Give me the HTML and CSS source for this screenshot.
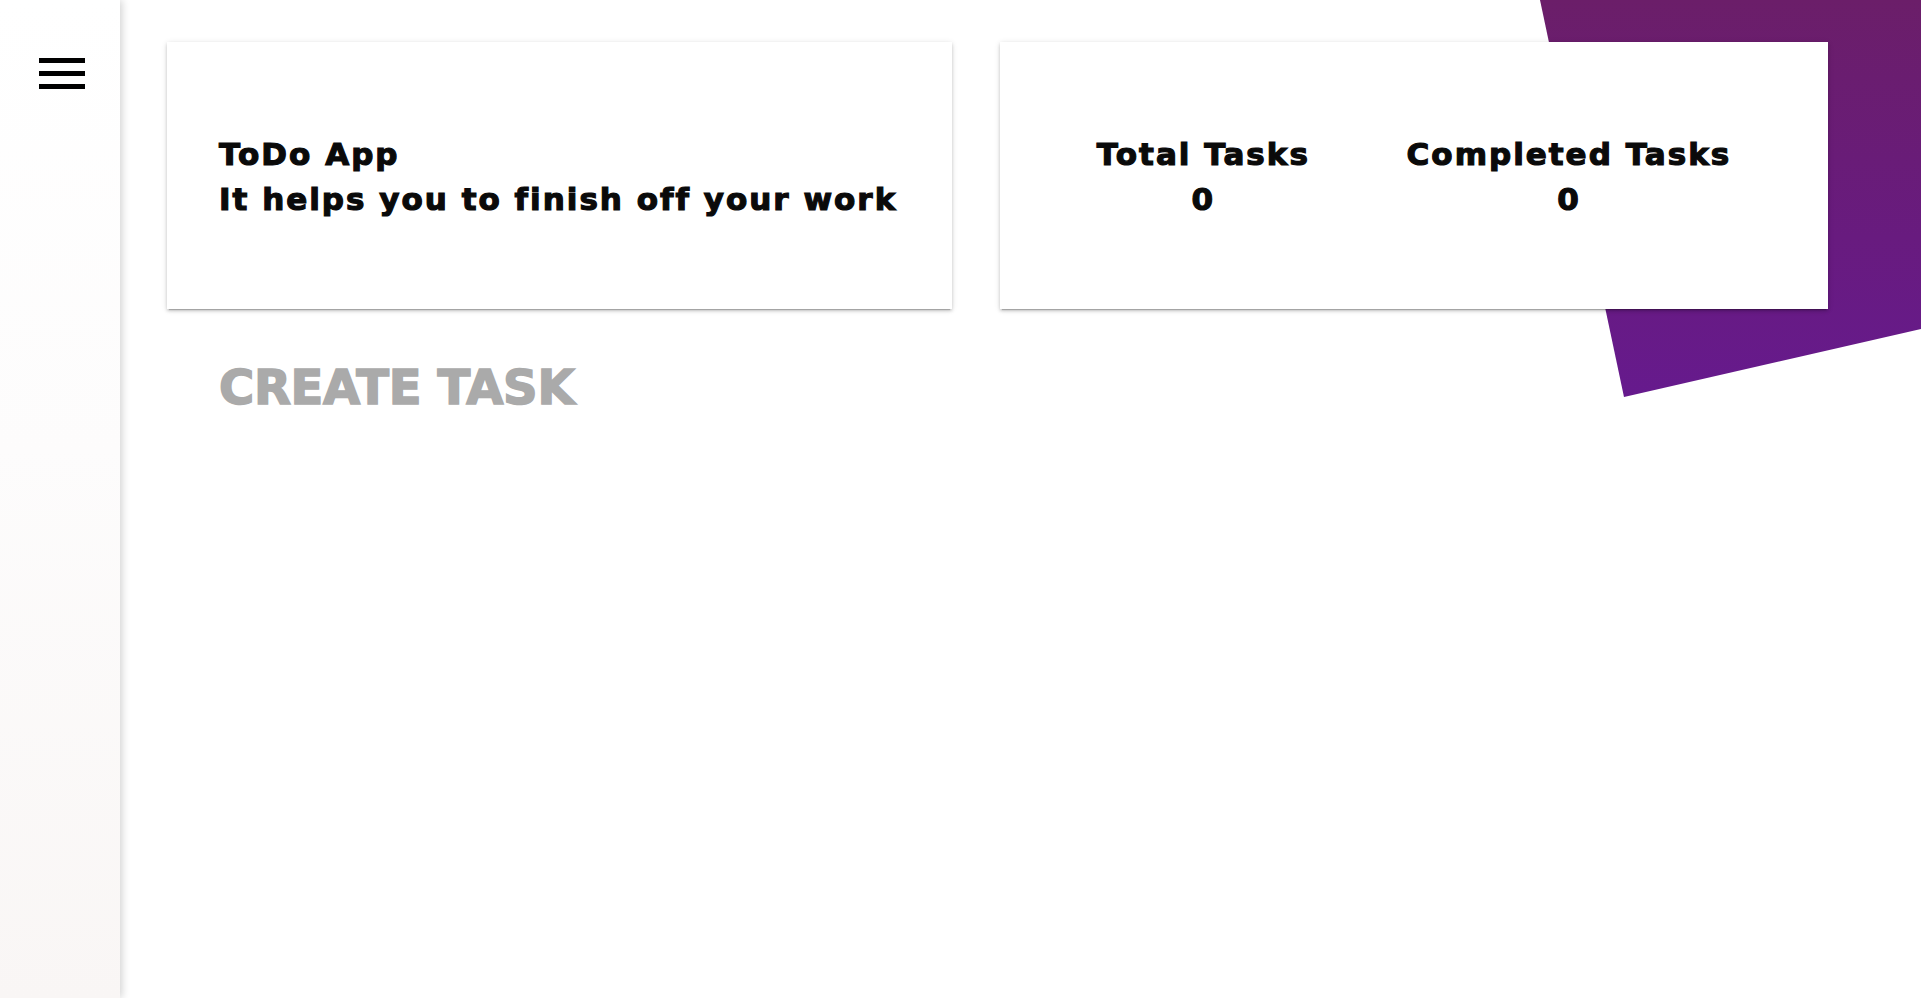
FILE: index.html
```html
<!DOCTYPE html>
<html lang="en">
<head>
<meta charset="utf-8">
<title>ToDo App</title>
<link rel="stylesheet" href="styles.css">
</head>
<body>
  <div class="decor"></div>
  <aside class="sidebar">
    <button class="menu-btn" aria-label="Menu">
      <svg width="46" height="32" viewBox="0 0 46 32">
        <rect x="0" y="0" width="46" height="5" fill="#000"/>
        <rect x="0" y="13" width="46" height="5" fill="#000"/>
        <rect x="0" y="26" width="46" height="5" fill="#000"/>
      </svg>
    </button>
  </aside>
  <main class="main">
    <section class="cards">
      <div class="card card-intro">
        <div class="intro-text">
          <div>ToDo App</div>
          <div>It helps you to finish off your work</div>
        </div>
      </div>
      <div class="card card-stats">
        <div class="stat">
          <div>Total Tasks</div>
          <div>0</div>
        </div>
        <div class="stat">
          <div>Completed Tasks</div>
          <div>0</div>
        </div>
      </div>
    </section>
    <h1 class="create-title">CREATE TASK</h1>
  </main>
</body>
</html>
```
FILE: styles.css
```css
html, body {
  margin: 0;
  padding: 0;
  height: 100%;
}
body {
  display: flex;
  background: #fff;
  font-family: "DejaVu Sans", "Liberation Sans", sans-serif;
  overflow: hidden;
}
.decor {
  position: absolute;
  top: 0;
  right: 0;
  width: 381px;
  height: 397px;
  background: linear-gradient(180deg, #6b1e69 0%, #681b7f 60%, #661a8d 100%);
  clip-path: polygon(0 0, 100% 0, 100% 329px, 84px 397px);
  z-index: 0;
}
.sidebar {
  width: 120px;
  flex: none;
  height: 998px;
  background: linear-gradient(180deg, #ffffff 0%, #fdfcfc 45%, #f9f6f5 100%);
  box-shadow: 2px 0 8px rgba(0, 0, 0, 0.18);
  position: relative;
  z-index: 2;
  display: flex;
  justify-content: center;
  align-items: flex-start;
}
.menu-btn {
  margin-top: 58px;
  margin-left: 4px;
  padding: 0;
  border: 0;
  background: transparent;
  display: block;
  line-height: 0;
  cursor: pointer;
}
.main {
  position: relative;
  z-index: 1;
  flex: 1;
  padding: 42px 0 0 47px;
}
.cards {
  display: flex;
  gap: 48px;
}
.card {
  background: #fff;
  height: 267px;
  box-sizing: border-box;
  padding-top: 3px;
  box-shadow: 0 3px 1px -2px rgba(0,0,0,0.2), 0 2px 3px 0 rgba(0,0,0,0.16), 0 1px 6px 0 rgba(0,0,0,0.12);
  font-weight: bold;
  font-size: 31px;
  letter-spacing: 2px;
  line-height: 45px;
  color: #0a0a0a;
  -webkit-text-stroke: 1.2px #0a0a0a;
}
.card-intro {
  width: 785px;
  display: flex;
  align-items: center;
  padding-left: 52px;
}
.card-stats {
  width: 828px;
  display: flex;
  align-items: center;
  justify-content: space-evenly;
}
.stat {
  text-align: center;
}
.create-title {
  margin: 48px 0 0 52px;
  font-size: 48px;
  line-height: 60px;
  font-weight: bold;
  letter-spacing: -0.3px;
  color: #aaaaaa;
  -webkit-text-stroke: 1.6px #aaaaaa;
}
```
